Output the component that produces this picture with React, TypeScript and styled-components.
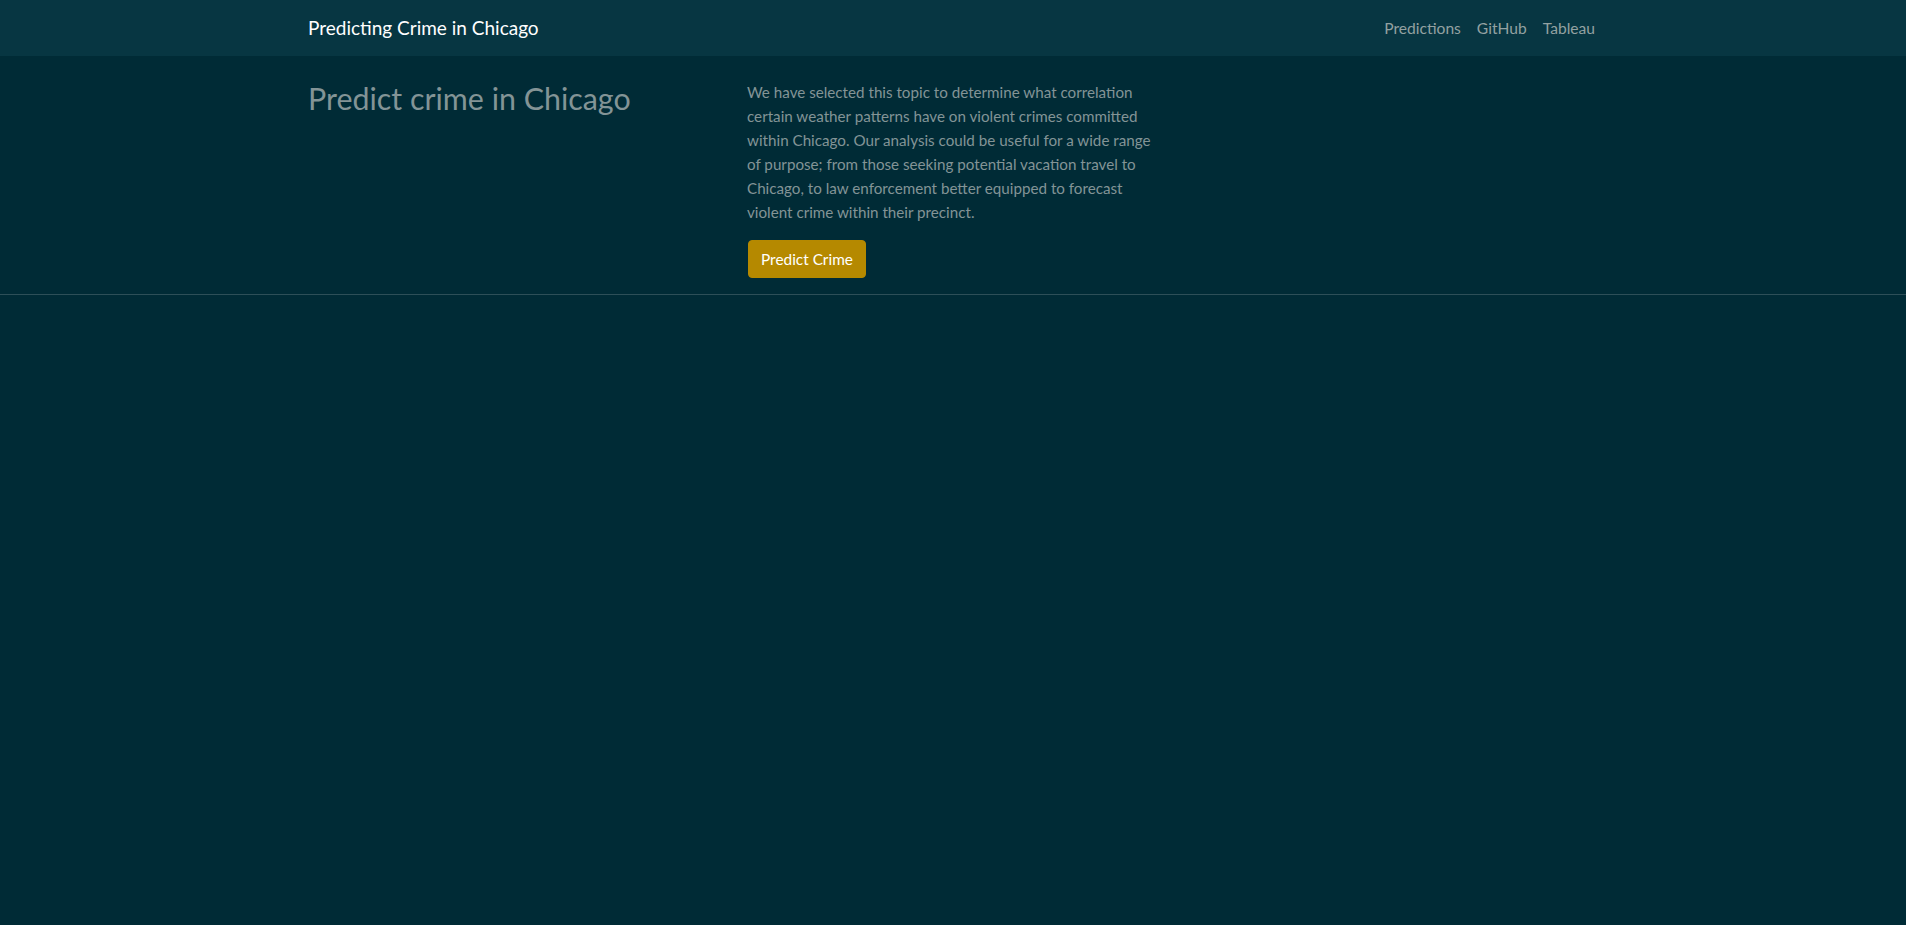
import React from "react";
import styled, { createGlobalStyle } from "styled-components";

const GlobalStyle = createGlobalStyle`
  html, body {
    margin: 0;
    padding: 0;
    background: #002b36;
  }
  body {
    font-family: "Lato", "Open Sans", sans-serif;
    color: #839496;
    -webkit-font-smoothing: antialiased;
  }
  *, *::before, *::after { box-sizing: border-box; }
`;

const Page = styled.div`
  min-height: 925px;
  background: #002b36;
`;

const NavBar = styled.nav`
  background: #073642;
  height: 56px;
`;

const Container = styled.div`
  max-width: 1320px;
  margin: 0 auto;
  padding: 0 12px;
`;

const NavInner = styled(Container)`
  height: 100%;
  display: flex;
  align-items: center;
  justify-content: space-between;
`;

const Brand = styled.a`
  margin-left: 3px;
  color: #ffffff;
  font-size: 19px;
  line-height: 30px;
  text-decoration: none;
  white-space: nowrap;
`;

const NavLinks = styled.ul`
  display: flex;
  list-style: none;
  margin: 0 -2px 0 0;
  padding: 0;
`;

const NavLink = styled.a`
  display: block;
  padding: 8px 8px;
  font-size: 15.6px;
  line-height: 24px;
  color: #93a1a1;
  text-decoration: none;
`;

const Hero = styled.section`
  border-bottom: 1px solid #2d4f58;
  padding: 24px 0 16px;
`;

const Row = styled.div`
  display: grid;
  grid-template-columns: repeat(3, 1fr);
  margin: 0 -12px;
`;

const Col = styled.div`
  padding: 0 12px;
`;

const Title = styled.h2`
  margin: 0;
  padding-left: 3px;
  font-size: 30.4px;
  font-weight: 400;
  line-height: 1.2;
  color: #839496;
`;

const Lead = styled.p`
  margin: 0 0 16px;
  padding-left: 2px;
  max-width: 414px;
  font-size: 15.2px;
  line-height: 24px;
  color: #839496;
`;

const Button = styled.button`
  margin-left: 3px;
  display: inline-block;
  font-family: inherit;
  font-size: 15.4px;
  line-height: 24px;
  padding: 6px 12px;
  color: #ffffff;
  background: #b58900;
  border: 1px solid #b58900;
  border-radius: 4px;
  cursor: pointer;
`;

export default function App() {
  return (
    <Page>
      <GlobalStyle />
      <NavBar>
        <NavInner>
          <Brand href="#">Predicting Crime in Chicago</Brand>
          <NavLinks>
            <li><NavLink href="#">Predictions</NavLink></li>
            <li><NavLink href="#">GitHub</NavLink></li>
            <li><NavLink href="#">Tableau</NavLink></li>
          </NavLinks>
        </NavInner>
      </NavBar>
      <Hero>
        <Container>
          <Row>
            <Col>
              <Title>Predict crime in Chicago</Title>
            </Col>
            <Col>
              <Lead>
                We have selected this topic to determine what correlation certain weather
                patterns have on violent crimes committed within Chicago. Our analysis could be
                useful for a wide range of purpose; from those seeking potential vacation travel
                to Chicago, to law enforcement better equipped to forecast violent crime within
                their precinct.
              </Lead>
              <Button type="button">Predict Crime</Button>
            </Col>
            <Col />
          </Row>
        </Container>
      </Hero>
    </Page>
  );
}
